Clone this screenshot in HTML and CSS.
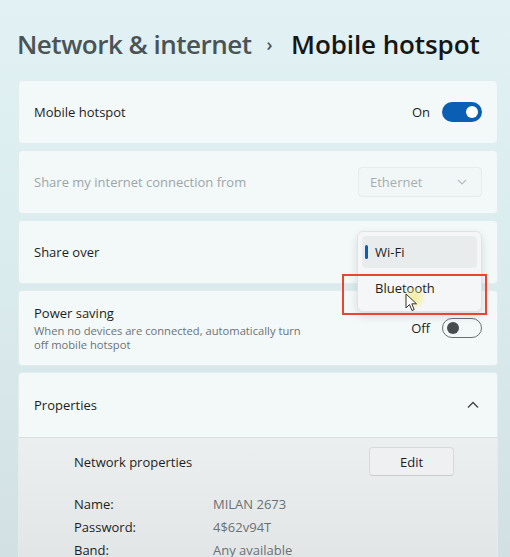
FILE: index.html
```html
<!DOCTYPE html>
<html>
<head>
<meta charset="utf-8">
<link rel="stylesheet" href="styles.css">
</head>
<body>
<div class="page">
  <h1 class="crumb"><span class="parent">Network &amp; internet</span><span class="sep">›</span><span class="current">Mobile hotspot</span></h1>
  <div class="cards">
    <div class="card row h64">
      <span class="label">Mobile hotspot</span>
      <div class="ctl"><span class="state">On</span><span class="toggle on"><span class="knob"></span></span></div>
    </div>
    <div class="card row h64">
      <span class="label disabled">Share my internet connection from</span>
      <div class="combo"><span>Ethernet</span>
        <svg width="10" height="6" viewBox="0 0 10 6"><path d="M1 1 L5 5 L9 1" fill="none" stroke="#b5bcbf" stroke-width="1.2"/></svg>
      </div>
    </div>
    <div class="card row h64 share">
      <span class="label">Share over</span>
      <div class="menu">
        <div class="item sel"><span class="bar"></span>Wi-Fi</div>
        <div class="item">Bluetooth</div>
      </div>
      <div class="highlight"></div>
      <div class="glow"></div>
      <svg class="cursor" width="14" height="20" viewBox="0 0 14 20"><path d="M1 1 L1 15 L4.5 11.5 L7 17.5 L9.2 16.6 L6.8 10.8 L11.5 10.8 Z" fill="#fff" stroke="#333" stroke-width="1"/></svg>
    </div>
    <div class="card row h76">
      <div class="text">
        <span class="label">Power saving</span>
        <span class="desc">When no devices are connected, automatically turn<br>off mobile hotspot</span>
      </div>
      <div class="ctl"><span class="state">Off</span><span class="toggle off"><span class="knob"></span></span></div>
    </div>
    <div class="card expander">
      <div class="exp-head row h64">
        <span class="label">Properties</span>
        <svg width="12" height="8" viewBox="0 0 12 8"><path d="M1 6.5 L6 1.5 L11 6.5" fill="none" stroke="#444" stroke-width="1.3"/></svg>
      </div>
      <div class="exp-body">
        <div class="np-row">
          <span class="label">Network properties</span>
          <span class="btn">Edit</span>
        </div>
        <dl class="props">
          <dt>Name:</dt><dd>MILAN 2673</dd>
          <dt>Password:</dt><dd>4$62v94T</dd>
          <dt>Band:</dt><dd>Any available</dd>
        </dl>
      </div>
    </div>
  </div>
</div>
</body>
</html>
```

FILE: styles.css
```css
html, body {
  margin: 0;
  height: 100%;
  overflow: hidden;
}
body {
  background: linear-gradient(180deg, #e1f1f4 0%, #dbecef 45%, #d2e0e3 100%);
  font-family: "Open Sans", "Noto Sans", sans-serif;
  color: #1b1b1b;
}
.page {
  padding: 0 12px 0 18px;
  height: 557px;
  overflow: hidden;
}
.crumb {
  margin: 0 0 0 -1px;
  height: 80px;
  padding-top: 24px;
  box-sizing: border-box;
  font-size: 26px;
  line-height: 40px;
  font-weight: 600;
  letter-spacing: -0.5px;
  display: flex;
  align-items: baseline;
  white-space: nowrap;
}
.parent { color: #4a5356; }
.sep {
  color: #4a5356;
  font-size: 18px;
  margin: 0 19px 0 15px;
  position: relative;
  top: -3px;
}
.current { color: #161616; letter-spacing: -0.1px; }
.cards {
  display: flex;
  flex-direction: column;
  gap: 6px;
}
.card {
  background: #f3f8f9;
  border: 1px solid #e2ebed;
  border-radius: 4px;
  box-sizing: border-box;
}
.row {
  display: flex;
  align-items: center;
  justify-content: space-between;
  padding: 0 15px 0 15px;
}
.h64 { height: 64px; }
.h76 { height: 76px; }
.label {
  font-size: 13px;
  line-height: 18px;
  color: #1e1e1e;
}
.label.disabled { color: #9ea6a8; }
.ctl {
  display: flex;
  align-items: center;
  gap: 12px;
}
.state {
  font-size: 13px;
  color: #1e1e1e;
}
.toggle {
  width: 40px;
  height: 20px;
  border-radius: 10px;
  box-sizing: border-box;
  display: flex;
  align-items: center;
}
.toggle.on {
  background: #0a5fb4;
  justify-content: flex-end;
  padding-right: 4px;
}
.toggle.on .knob {
  width: 12px;
  height: 12px;
  border-radius: 50%;
  background: #fff;
}
.toggle.off {
  border: 1px solid #6b6f71;
  padding-left: 4px;
}
.toggle.off .knob {
  width: 12px;
  height: 12px;
  border-radius: 50%;
  background: #4a4d4f;
}
.combo {
  width: 124px;
  height: 30px;
  border: 1px solid #e6ecee;
  border-radius: 4px;
  background: #f1f6f7;
  box-sizing: border-box;
  display: flex;
  align-items: center;
  justify-content: space-between;
  padding: 0 14px 0 11px;
  font-size: 13px;
  color: #a7aeb0;
}
.share { position: relative; }
.menu {
  position: absolute;
  right: 15px;
  top: 10px;
  width: 125px;
  height: 81px;
  box-sizing: border-box;
  background: #f4f6f7;
  border: 1px solid #dfe3e4;
  border-radius: 6px;
  box-shadow: 0 4px 10px rgba(0,0,0,0.12);
  padding: 4px 4px;
  display: flex;
  flex-direction: column;
  gap: 4px;
  z-index: 5;
}
.item {
  height: 32px;
  border-radius: 4px;
  display: flex;
  align-items: center;
  padding-left: 13px;
  font-size: 13px;
  color: #1e1e1e;
  position: relative;
}
.item.sel {
  background: #e9eced;
}
.item .bar {
  position: absolute;
  left: 3px;
  top: 9px;
  width: 3px;
  height: 14px;
  border-radius: 2px;
  background: #0a5fb4;
}
.highlight {
  position: absolute;
  left: 323px;
  top: 53px;
  width: 145px;
  height: 41px;
  box-sizing: border-box;
  border: 2px solid #e9452f;
  z-index: 6;
}
.glow {
  position: absolute;
  left: 384px;
  top: 66px;
  width: 22px;
  height: 22px;
  border-radius: 50%;
  background: radial-gradient(circle, rgba(245,235,120,0.75) 0%, rgba(245,235,120,0.3) 55%, rgba(245,235,120,0) 75%);
  z-index: 7;
}
.cursor {
  position: absolute;
  left: 386px;
  top: 72px;
  z-index: 8;
}
.text {
  display: flex;
  flex-direction: column;
}
.desc {
  font-size: 11.2px;
  color: #6c7476;
  line-height: 14px;
  margin-top: 2px;
}
.expander {
  overflow: hidden;
}
.exp-head {
  border-bottom: 1px solid #d9dfe1;
  padding-right: 18px;
}
.exp-body {
  background: linear-gradient(180deg, #eceff0 0%, #dfe2e3 100%);
  padding: 8px 43px 20px 55px;
  height: 140px;
}
.np-row {
  display: flex;
  align-items: center;
  justify-content: space-between;
  height: 31px;
}
.btn {
  width: 85px;
  height: 29px;
  box-sizing: border-box;
  border: 1px solid #d7dadb;
  border-bottom-color: #c9cccd;
  border-radius: 4px;
  background: #eef0f1;
  display: flex;
  align-items: center;
  justify-content: center;
  font-size: 13px;
  color: #1e1e1e;
}
.props {
  margin: 18px 0 0 0;
  display: grid;
  grid-template-columns: 139px auto;
  row-gap: 4px;
  font-size: 13px;
  line-height: 19px;
}
.props dt { color: #1e1e1e; }
.props dd { margin: 0; color: #6a7173; }
```
